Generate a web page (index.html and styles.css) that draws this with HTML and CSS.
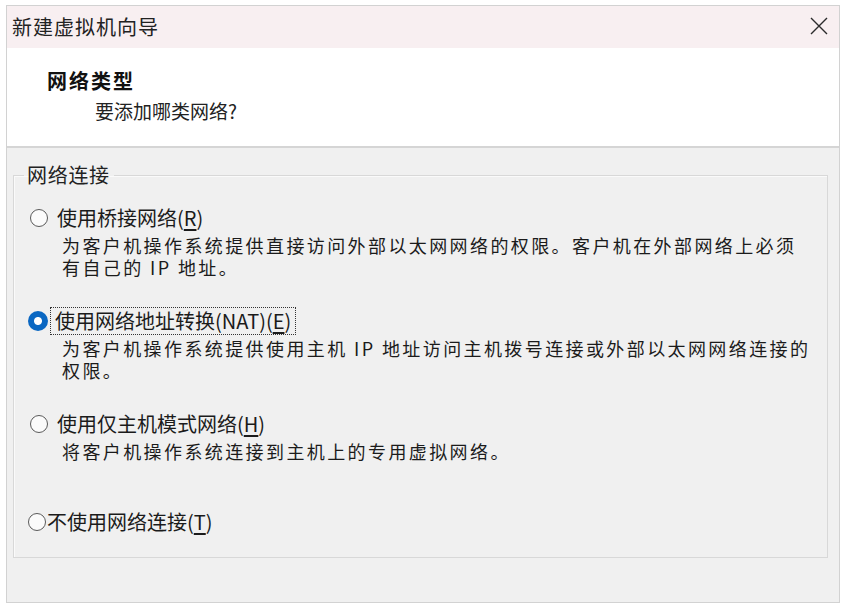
FILE: index.html
```html
<!DOCTYPE html>
<html lang="zh-CN">
<head>
<meta charset="utf-8">
<title>新建虚拟机向导</title>
<link rel="stylesheet" href="styles.css">
</head>
<body>
<div class="window">
  <div class="titlebar">
    <span class="title">新建虚拟机向导</span>
    <svg class="close" viewBox="0 0 18 18" width="18" height="18" aria-hidden="true">
      <path d="M1 1 L17 17 M17 1 L1 17" stroke="#2b2b2b" stroke-width="1.4" fill="none"/>
    </svg>
  </div>
  <div class="header">
    <div class="h-title">网络类型</div>
    <div class="h-sub">要添加哪类网络?</div>
  </div>
  <div class="body">
    <fieldset class="group">
      <legend>网络连接</legend>
      <div class="option">
        <div class="opt-row"><span class="radio"></span><span class="label">使用桥接网络(<u>R</u>)</span></div>
        <div class="desc">为客户机操作系统提供直接访问外部以太网网络的权限。客户机在外部网络上必须<br>有自己的 IP 地址。</div>
      </div>
      <div class="option">
        <div class="opt-row"><span class="radio checked"></span><span class="label focus">使用网络地址转换(NAT)(<u>E</u>)</span></div>
        <div class="desc">为客户机操作系统提供使用主机 IP 地址访问主机拨号连接或外部以太网网络连接的<br>权限。</div>
      </div>
      <div class="option">
        <div class="opt-row"><span class="radio"></span><span class="label">使用仅主机模式网络(<u>H</u>)</span></div>
        <div class="desc">将客户机操作系统连接到主机上的专用虚拟网络。</div>
      </div>
      <div class="option last">
        <div class="opt-row tight"><span class="radio"></span><span class="label">不使用网络连接(<u>T</u>)</span></div>
      </div>
    </fieldset>
  </div>
</div>
</body>
</html>
```

FILE: styles.css
```css
html, body {
  margin: 0;
  padding: 0;
  background: #ffffff;
}
body {
  font-family: "Noto Sans CJK SC", "Noto Sans", sans-serif;
  color: #1b1b1b;
}
.window {
  margin: 5px 0 0 6px;
  width: 832px;
  height: 596px;
  border: 1px solid #d2d2d2;
  display: flex;
  flex-direction: column;
  background: #f0f0f0;
}
.titlebar {
  height: 42px;
  flex: none;
  background: #f8eff1;
  display: flex;
  align-items: center;
  justify-content: space-between;
  padding: 0 11px 0 5px;
}
.title {
  font-size: 20px;
  letter-spacing: 1px;
  line-height: 26px;
  color: #222;
}
.close {
  display: block;
  margin-top: -2px;
}
.header {
  height: 100px;
  flex: none;
  background: #ffffff;
  border-bottom: 2px solid #d5d5d5;
  padding: 20px 0 0 40px;
  box-sizing: border-box;
}
.h-title {
  font-size: 20px;
  font-weight: bold;
  letter-spacing: 2px;
  line-height: 26px;
  color: #111;
}
.h-sub {
  font-size: 19px;
  line-height: 26px;
  margin: 4px 0 0 48px;
  color: #222;
}
.body {
  flex: 1;
  padding: 13px 11px 0 6px;
}
.group {
  margin: 0;
  border: 1px solid #d8d8d8;
  box-shadow: inset 1px 1px 0 #fafafa;
  padding: 16px 0 20px 16px;
  height: 397px;
  box-sizing: border-box;
}
.group legend {
  font-size: 20px;
  letter-spacing: 0.7px;
  line-height: 28px;
  padding: 0 4px 0 3px;
  margin-left: -6px;
  color: #222;
}
.option {
  margin-bottom: 30px;
}
.option.last {
  margin-top: 47px;
  margin-left: -2px;
}
.opt-row {
  display: flex;
  align-items: center;
  height: 26px;
}
.radio {
  width: 16px;
  height: 16px;
  border: 1.3px solid #5a5a5a;
  border-radius: 50%;
  background: #fbfbfb;
  flex: none;
  margin-right: 4px;
}
.radio.checked {
  width: 20px;
  height: 20px;
  border: none;
  margin-left: -2px;
  margin-right: 2px;
  background: radial-gradient(circle, #ffffff 0 3.5px, #0a67c2 4.5px);
}
.label {
  font-size: 20px;
  line-height: 24px;
  padding: 1px 4px;
  border: 1px solid transparent;
  color: #1b1b1b;
}
.opt-row.tight .label {
  padding-left: 0;
  margin-left: -4px;
}
.label.focus {
  border: 1px dotted #333;
}
.label u {
  text-underline-offset: 3px;
}
.desc {
  margin: 3px 0 0 32px;
  font-size: 18px;
  letter-spacing: 2.4px;
  line-height: 22px;
  white-space: nowrap;
  color: #1b1b1b;
}
```
